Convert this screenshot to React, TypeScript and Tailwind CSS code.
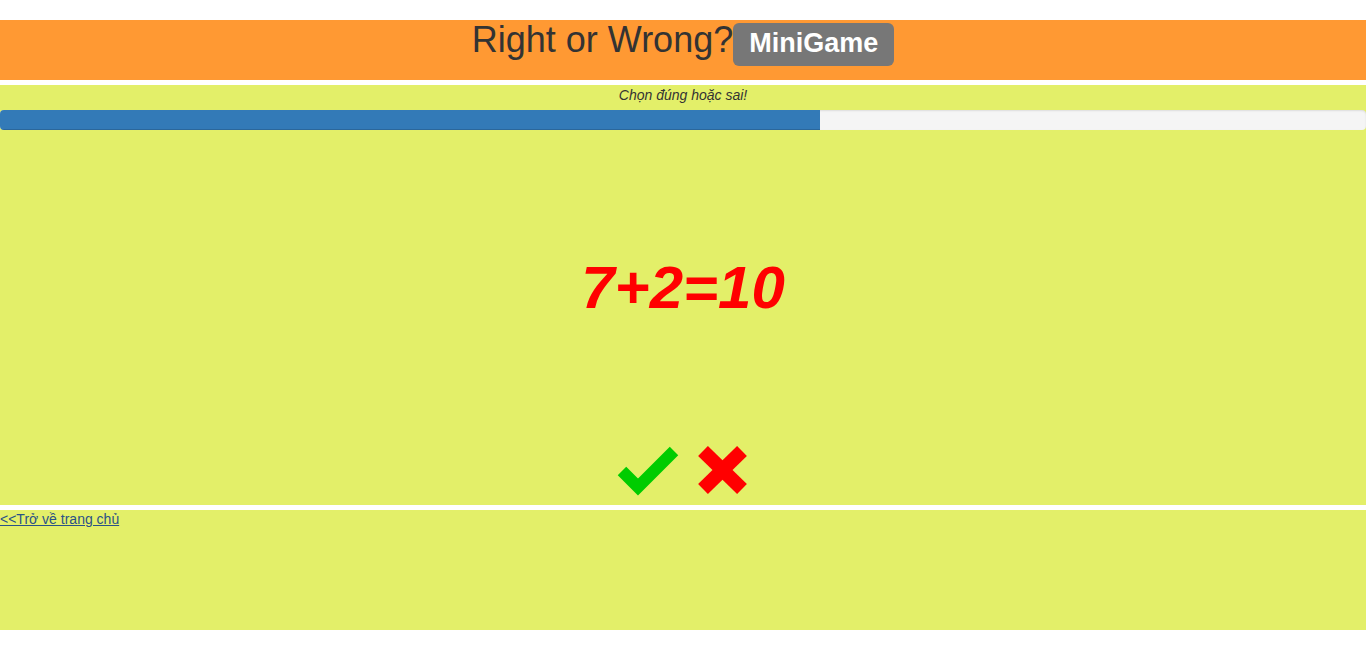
import React from 'react';

const font = { fontFamily: '"Liberation Sans", Arial, Helvetica, sans-serif' };

export default function App() {
  const progress = 60;

  return (
    <div className="min-h-[665px] bg-white text-[#333]" style={font}>
      {/* Header */}
      <div className="mt-[20px] h-[60px] bg-[#ff9933] flex justify-center items-start">
        <h1 className="text-[36px] leading-[1.1] font-normal text-[#333]">Right or Wrong?</h1>
        <span className="mt-[3px] inline-block h-[43px] px-[16px] pt-[5px] pb-[8px] text-[27px] leading-[30px] font-bold text-white bg-[#777] rounded-[6px]">
          MiniGame
        </span>
      </div>

      {/* Game area */}
      <div className="mt-[5px] h-[420px] bg-[#e3ef69]">
        <p className="text-center text-[14px] leading-[20px] italic text-[#333]">Chọn đúng hoặc sai!</p>
        <div className="mt-[5px] h-[20px] bg-[#f5f5f5] rounded-[4px] overflow-hidden shadow-[inset_0_1px_2px_rgba(0,0,0,0.1)]">
          <div
            className="h-full bg-[#337ab7] shadow-[inset_0_-1px_0_rgba(0,0,0,0.15)]"
            style={{ width: `${progress}%` }}
          />
        </div>
        <div className="mt-[128px] text-center text-[60px] leading-none font-bold italic text-[#ff0000]">
          7+2=10
        </div>
        <div className="mt-[126px] flex justify-center gap-[16px]">
          <button className="block">
            <svg width="64" height="54" viewBox="0 0 64 54">
              <polyline
                points="5,27 21,43 57,7"
                fill="none"
                stroke="#00cc00"
                strokeWidth="12"
                strokeLinejoin="miter"
                strokeLinecap="butt"
              />
            </svg>
          </button>
          <button className="block">
            <svg width="52" height="52" viewBox="0 0 52 52">
              <line x1="6" y1="6" x2="45" y2="44" stroke="#ff0000" strokeWidth="14" />
              <line x1="45" y1="6" x2="6" y2="44" stroke="#ff0000" strokeWidth="14" />
            </svg>
          </button>
        </div>
      </div>

      {/* Footer */}
      <div className="mt-[5px] h-[120px] bg-[#e3ef69]">
        <a href="#" className="block w-fit text-[14px] leading-[19px] text-[#2a5286] underline">
          &lt;&lt;Trở về trang chủ
        </a>
      </div>
    </div>
  );
}
